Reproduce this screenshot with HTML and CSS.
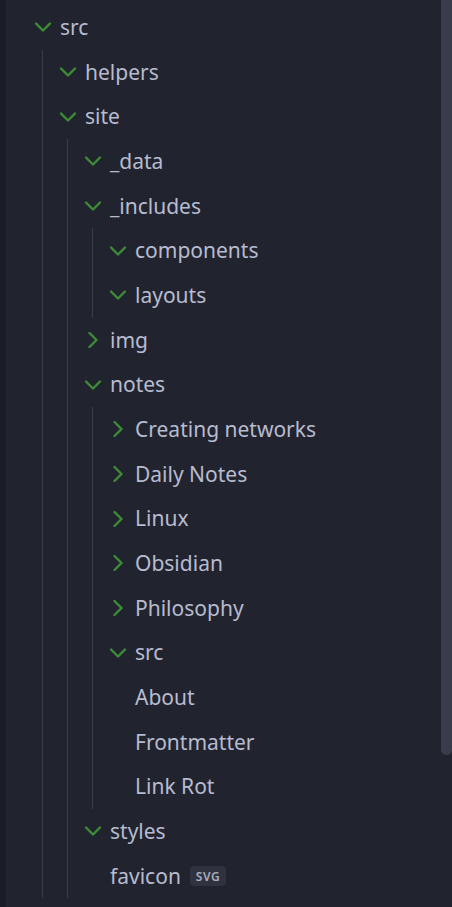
FILE: index.html
```html
<!DOCTYPE html>
<html>
<head>
<meta charset="utf-8">
<link rel="stylesheet" href="styles.css">
</head>
<body>
<div class="pane">
  <div class="tree">
    <div class="row"><span class="chev"><svg viewBox="0 0 16 16"><path d="M1 4.5 L8 11.5 L15 4.5"/></svg></span><span class="name">src</span></div>
    <div class="kids">
      <div class="row"><span class="chev"><svg viewBox="0 0 16 16"><path d="M1 4.5 L8 11.5 L15 4.5"/></svg></span><span class="name">helpers</span></div>
      <div class="row"><span class="chev"><svg viewBox="0 0 16 16"><path d="M1 4.5 L8 11.5 L15 4.5"/></svg></span><span class="name">site</span></div>
      <div class="kids">
        <div class="row"><span class="chev"><svg viewBox="0 0 16 16"><path d="M1 4.5 L8 11.5 L15 4.5"/></svg></span><span class="name">_data</span></div>
        <div class="row"><span class="chev"><svg viewBox="0 0 16 16"><path d="M1 4.5 L8 11.5 L15 4.5"/></svg></span><span class="name">_includes</span></div>
        <div class="kids">
          <div class="row"><span class="chev"><svg viewBox="0 0 16 16"><path d="M1 4.5 L8 11.5 L15 4.5"/></svg></span><span class="name">components</span></div>
          <div class="row"><span class="chev"><svg viewBox="0 0 16 16"><path d="M1 4.5 L8 11.5 L15 4.5"/></svg></span><span class="name">layouts</span></div>
        </div>
        <div class="row"><span class="chev"><svg viewBox="0 0 16 16"><path d="M4.5 1 L11.5 8 L4.5 15"/></svg></span><span class="name">img</span></div>
        <div class="row"><span class="chev"><svg viewBox="0 0 16 16"><path d="M1 4.5 L8 11.5 L15 4.5"/></svg></span><span class="name">notes</span></div>
        <div class="kids">
          <div class="row"><span class="chev"><svg viewBox="0 0 16 16"><path d="M4.5 1 L11.5 8 L4.5 15"/></svg></span><span class="name">Creating networks</span></div>
          <div class="row"><span class="chev"><svg viewBox="0 0 16 16"><path d="M4.5 1 L11.5 8 L4.5 15"/></svg></span><span class="name">Daily Notes</span></div>
          <div class="row"><span class="chev"><svg viewBox="0 0 16 16"><path d="M4.5 1 L11.5 8 L4.5 15"/></svg></span><span class="name">Linux</span></div>
          <div class="row"><span class="chev"><svg viewBox="0 0 16 16"><path d="M4.5 1 L11.5 8 L4.5 15"/></svg></span><span class="name">Obsidian</span></div>
          <div class="row"><span class="chev"><svg viewBox="0 0 16 16"><path d="M4.5 1 L11.5 8 L4.5 15"/></svg></span><span class="name">Philosophy</span></div>
          <div class="row"><span class="chev"><svg viewBox="0 0 16 16"><path d="M1 4.5 L8 11.5 L15 4.5"/></svg></span><span class="name">src</span></div>
          <div class="row"><span class="chev empty"></span><span class="name">About</span></div>
          <div class="row"><span class="chev empty"></span><span class="name">Frontmatter</span></div>
          <div class="row"><span class="chev empty"></span><span class="name">Link Rot</span></div>
        </div>
        <div class="row"><span class="chev"><svg viewBox="0 0 16 16"><path d="M1 4.5 L8 11.5 L15 4.5"/></svg></span><span class="name">styles</span></div>
        <div class="row"><span class="chev empty"></span><span class="name">favicon</span><span class="badge">SVG</span></div>
      </div>
    </div>
  </div>
  <div class="scrollbar"></div>
</div>
</body>
</html>
```
FILE: styles.css
```css
html, body {
  margin: 0;
  padding: 0;
  background: #21242f;
}
body {
  width: 452px;
  height: 907px;
  overflow: hidden;
  font-family: "Noto Sans", "Open Sans", sans-serif;
}
.pane {
  position: relative;
  height: 907px;
  border-left: 6px solid #1a1d26;
  box-sizing: border-box;
}
.tree {
  padding-top: 5px;
  padding-left: 12px;
}
.row {
  height: 44.68px;
  display: flex;
  align-items: center;
  padding-left: 17px;
  color: #b7bbcf;
  font-size: 21px;
  white-space: nowrap;
}
.chev {
  width: 16px;
  height: 16px;
  margin-right: 9px;
  flex: none;
  display: flex;
}
.chev svg {
  width: 16px;
  height: 16px;
  fill: none;
  stroke: #3d8c35;
  stroke-width: 2.4;
  stroke-linecap: round;
  stroke-linejoin: round;
}
.name {
  line-height: 1;
}
.kids {
  margin-left: 24px;
  border-left: 1px solid #3a3d4b;
}
.badge {
  margin-left: 9px;
  background: #30333f;
  color: #a9aebf;
  font-size: 12px;
  font-weight: 600;
  letter-spacing: 0.5px;
  height: 20px;
  padding: 0 6px;
  border-radius: 4px;
  display: flex;
  align-items: center;
}
.scrollbar {
  position: absolute;
  right: 0;
  top: 0;
  width: 11px;
  height: 755px;
  background: #393c4a;
  border-radius: 0 0 5px 5px;
}
```
